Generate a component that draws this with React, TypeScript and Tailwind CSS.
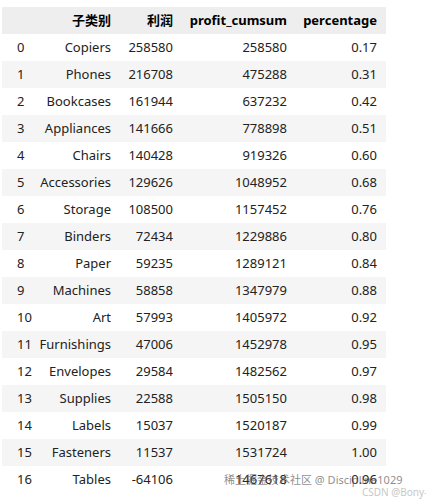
// DataFrame preview: sub-category profit with running cumsum and share

const ROWS: [string, number, number, string][] = [
  ['Copiers',     258580,  258580, '0.17'],
  ['Phones',      216708,  475288, '0.31'],
  ['Bookcases',   161944,  637232, '0.42'],
  ['Appliances',  141666,  778898, '0.51'],
  ['Chairs',      140428,  919326, '0.60'],
  ['Accessories', 129626, 1048952, '0.68'],
  ['Storage',     108500, 1157452, '0.76'],
  ['Binders',      72434, 1229886, '0.80'],
  ['Paper',        59235, 1289121, '0.84'],
  ['Machines',     58858, 1347979, '0.88'],
  ['Art',          57993, 1405972, '0.92'],
  ['Furnishings',  47006, 1452978, '0.95'],
  ['Envelopes',    29584, 1482562, '0.97'],
  ['Supplies',     22588, 1505150, '0.98'],
  ['Labels',       15037, 1520187, '0.99'],
  ['Fasteners',    11537, 1531724, '1.00'],
  ['Tables',      -64106, 1467618, '0.96'],
]

const font = "font-['Noto_Sans','Noto_Sans_CJK_SC',sans-serif]"

export default function App() {
  return (
    <div className={`relative h-[500px] w-[426px] overflow-hidden bg-white ${font} text-[13px] text-[#222]`}>
      <div className="pl-[2px] pt-[7px]">
        <table className="border-collapse">
          <thead>
            <tr className="h-[27px] bg-[#eeeeee] font-bold text-black">
              <th className="w-[30px]" />
              <th className="w-[88px] pr-[9px] text-right">子类别</th>
              <th className="w-[61px] pr-[8px] text-right">利润</th>
              <th className="w-[115px] pr-[9px] text-right">profit_cumsum</th>
              <th className="w-[90px] pr-[9px] text-right">percentage</th>
            </tr>
          </thead>
          <tbody>
            {ROWS.map(([name, profit, cum, pct], i) => (
              <tr key={name} className={`h-[27px] ${i % 2 === 1 ? 'bg-[#f5f5f5]' : 'bg-white'}`}>
                <td className="pl-[15px] text-left">{i}</td>
                <td className="pr-[9px] text-right">{name}</td>
                <td className="pr-[8px] text-right">{profit}</td>
                <td className="pr-[9px] text-right">{cum}</td>
                <td className="pr-[9px] text-right">{pct}</td>
              </tr>
            ))}
          </tbody>
        </table>
      </div>

      {/* watermarks */}
      <div className="absolute left-[224px] top-[472px] whitespace-nowrap text-[11px] text-[#666]/75">稀土掘金技术社区 @ Discipline1029</div>
      <div className="absolute left-[362px] top-[485px] whitespace-nowrap text-[10px] text-[#c8c8c8]">CSDN @Bony-</div>
    </div>
  )
}
